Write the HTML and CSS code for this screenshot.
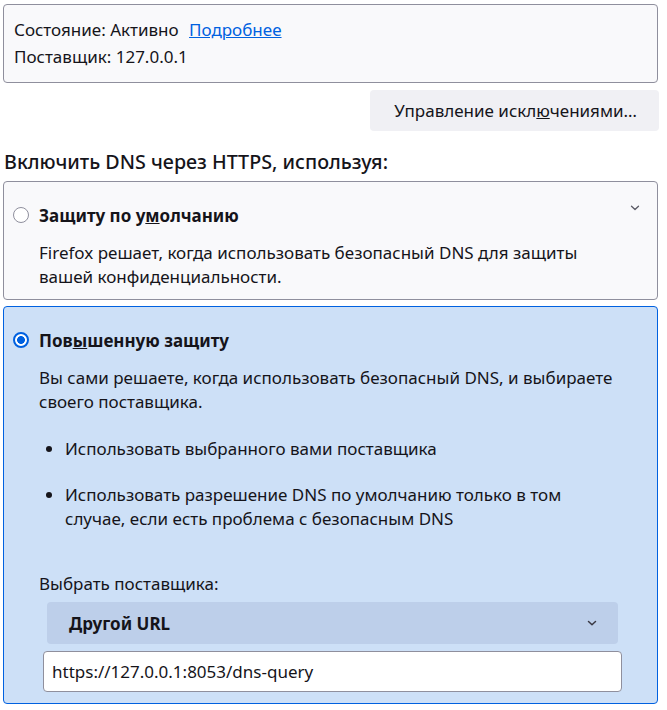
FILE: index.html
```html
<!DOCTYPE html>
<html lang="ru">
<head>
<meta charset="utf-8">
<link rel="stylesheet" href="styles.css">
</head>
<body>
<div class="page">
  <div class="status-box">
    <div class="status-line">Состояние: Активно <a class="link" href="#">Подробнее</a></div>
    <div class="status-line second">Поставщик: 127.0.0.1</div>
  </div>
  <div class="btn-row">
    <button class="btn">Управление искл<u>ю</u>чениями…</button>
  </div>
  <h2 class="heading">Включить DNS через HTTPS, используя:</h2>

  <div class="card">
    <div class="card-head">
      <span class="radio"></span>
      <span class="card-title">Защиту по у<u>м</u>олчанию</span>
      <svg class="chev" width="10" height="6" viewBox="0 0 10 6"><path d="M1.5 1.2 L5 4.5 L8.5 1.2" fill="none" stroke="#5b5b66" stroke-width="1.3" stroke-linecap="round" stroke-linejoin="round"/></svg>
    </div>
    <p class="desc">Firefox решает, когда использовать безопасный DNS для защиты вашей конфиденциальности.</p>
  </div>

  <div class="card selected">
    <div class="card-head">
      <span class="radio checked"></span>
      <span class="card-title">Пов<u>ы</u>шенную защиту</span>
    </div>
    <p class="desc">Вы сами решаете, когда использовать безопасный DNS, и выбираете своего поставщика.</p>
    <ul class="bullets">
      <li>Использовать выбранного вами поставщика</li>
      <li>Использовать разрешение DNS по умолчанию только в том случае, если есть проблема с безопасным DNS</li>
    </ul>
    <div class="label">Выбрать поставщика:</div>
    <div class="select">
      <span class="select-text">Другой URL</span>
      <svg class="chev2" width="12" height="8" viewBox="0 0 12 8"><path d="M2.5 2.5 L6 5.8 L9.5 2.5" fill="none" stroke="#3a3944" stroke-width="1.5" stroke-linecap="round" stroke-linejoin="round"/></svg>
    </div>
    <div class="input">https://127.0.0.1:8053/dns-query</div>
  </div>
</div>
</body>
</html>
```

FILE: styles.css
```css
html, body {
  margin: 0;
  padding: 0;
  background: #ffffff;
}
body {
  font-family: "Noto Sans", "Open Sans", sans-serif;
  font-size: 17px;
  color: #15141a;
}
.page {
  padding: 4px 9px 0 3px;
}
.status-box {
  border: 1px solid #8f8f9d;
  border-radius: 4px;
  background: #f9f9fb;
  padding: 14px 10px 12px;
  height: 51px;
}
.status-line {
  line-height: 22px;
  height: 22px;
  white-space: nowrap;
}
.status-line.second {
  margin-top: 5px;
}
.link {
  color: #0061e0;
  text-decoration: underline;
  margin-left: 6px;
}
.btn-row {
  display: flex;
  justify-content: flex-end;
  margin-top: 7px;
}
.btn {
  font-family: inherit;
  font-size: 17px;
  color: #15141a;
  background: #f0f0f4;
  border: none;
  border-radius: 4px;
  height: 41px;
  padding: 0 22px 0 24px;
  margin-right: -1px;
  white-space: nowrap;
}
.heading {
  font-size: 19.7px;
  font-weight: 500;
  margin: 0;
  padding: 19px 0 0 1px;
  line-height: 24px;
  height: 31px;
  white-space: nowrap;
}
.card {
  border: 1px solid #8f8f9d;
  border-radius: 4px;
  background: #f9f9fb;
  padding: 21px 10px 10px 9px;
}
.card.selected {
  margin-top: 6px;
  border-color: #0061e0;
  background: #cde0f7;
  padding-bottom: 11px;
}
.card-head {
  display: flex;
  align-items: center;
  height: 24px;
  position: relative;
}
.radio {
  width: 16px;
  height: 16px;
  border: 1px solid #8f8f9d;
  border-radius: 50%;
  background: #fff;
  box-sizing: border-box;
  flex: none;
}
.radio.checked {
  border: 2px solid #0061e0;
  background: radial-gradient(circle, #0061e0 0 3.6px, #fff 4.2px);
}
.card-title {
  font-weight: 700;
  margin-left: 10px;
}
.chev {
  position: absolute;
  right: 7px;
  top: 2px;
}
.desc {
  margin: 14px 0 0 26px;
  line-height: 24px;
  padding-right: 20px;
}
.bullets {
  margin: 23px 60px 0 26px;
  padding-left: 26px;
  line-height: 24px;
}
.bullets li {
  margin-bottom: 22px;
}
.bullets li:last-child {
  margin-bottom: 0;
}
.label {
  margin: 41px 0 0 26px;
  line-height: 24px;
}
.select {
  margin: 6px 29px 0 34px;
  height: 42px;
  background: #bdcfea;
  border-radius: 4px;
  display: flex;
  align-items: center;
  justify-content: space-between;
  padding: 0 20px 0 22px;
}
.select-text {
  font-weight: 700;
}
.input {
  margin: 7px 25px 0 30px;
  height: 39px;
  line-height: 39px;
  background: #fff;
  border: 1px solid #8f8f9d;
  border-radius: 4px;
  padding: 0 8px;
}
```
